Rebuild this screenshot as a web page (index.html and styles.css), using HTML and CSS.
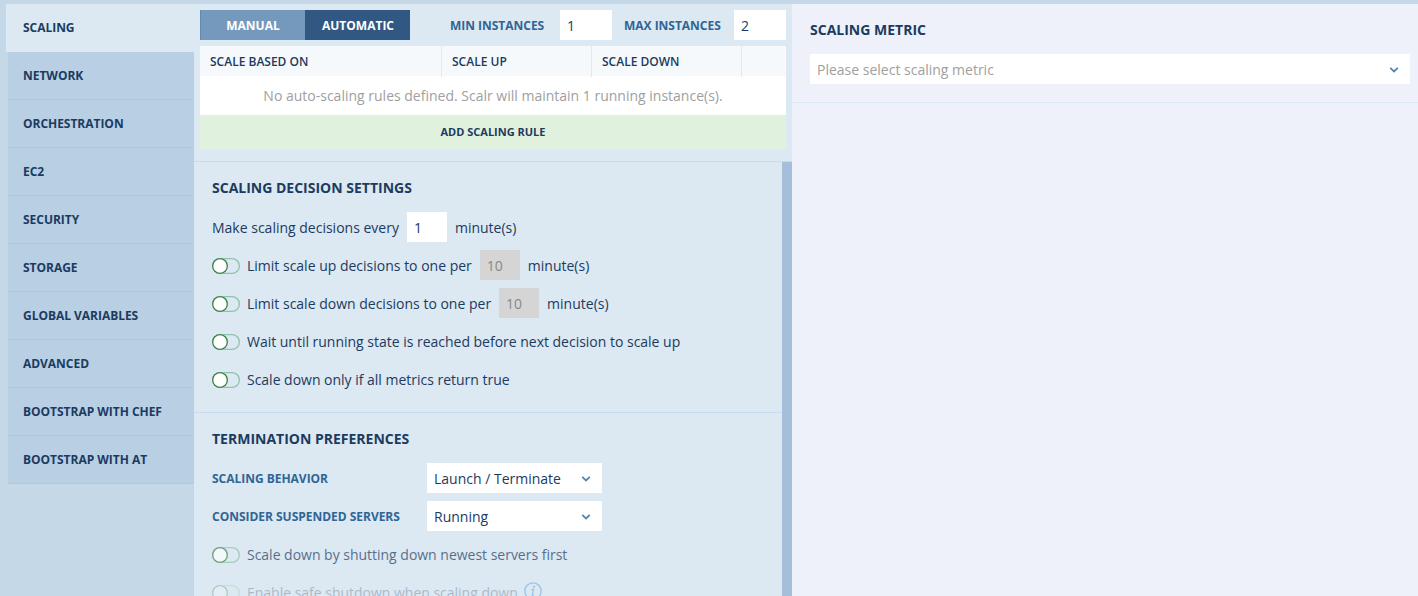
FILE: index.html
```html
<!DOCTYPE html>
<html lang="en">
<head>
<meta charset="utf-8">
<title>Scaling</title>
<link rel="stylesheet" href="styles.css">
</head>
<body>
<div class="app">
  <nav class="tabs">
    <a class="tab tab-active">SCALING</a>
    <a class="tab">NETWORK</a>
    <a class="tab">ORCHESTRATION</a>
    <a class="tab">EC2</a>
    <a class="tab">SECURITY</a>
    <a class="tab">STORAGE</a>
    <a class="tab">GLOBAL VARIABLES</a>
    <a class="tab">ADVANCED</a>
    <a class="tab">BOOTSTRAP WITH CHEF</a>
    <a class="tab">BOOTSTRAP WITH AT</a>
  </nav>

  <main class="main">
    <section class="rules">
      <div class="toolbar">
        <div class="segmented">
          <span class="segment">MANUAL</span>
          <span class="segment segment-on">AUTOMATIC</span>
        </div>
        <label class="label label-min">MIN INSTANCES</label>
        <div class="field field-count">1</div>
        <label class="label label-max">MAX INSTANCES</label>
        <div class="field field-count">2</div>
      </div>
      <div class="grid">
        <div class="grid-head">
          <span class="col">SCALE BASED ON</span>
          <span class="col">SCALE UP</span>
          <span class="col">SCALE DOWN</span>
          <span class="col"></span>
        </div>
        <div class="grid-empty">No auto-scaling rules defined. Scalr will maintain 1 running instance(s).</div>
        <div class="grid-add">ADD SCALING RULE</div>
      </div>
    </section>

    <div class="scroller">
      <div class="settings">
        <section class="group">
          <h2 class="title">SCALING DECISION SETTINGS</h2>
          <div class="row"><span class="text">Make scaling decisions every</span><div class="field field-small">1</div><span class="text">minute(s)</span></div>
          <div class="row"><i class="toggle"></i><span class="text">Limit scale up decisions to one per</span><div class="field field-small field-off">10</div><span class="text">minute(s)</span></div>
          <div class="row"><i class="toggle"></i><span class="text">Limit scale down decisions to one per</span><div class="field field-small field-off">10</div><span class="text">minute(s)</span></div>
          <div class="row"><i class="toggle"></i><span class="text text-long">Wait until running state is reached before next decision to scale up</span></div>
          <div class="row"><i class="toggle"></i><span class="text text-long">Scale down only if all metrics return true</span></div>
        </section>
        <section class="group">
          <h2 class="title">TERMINATION PREFERENCES</h2>
          <div class="row">
            <span class="label label-pref">SCALING BEHAVIOR</span>
            <div class="field select">Launch / Terminate<svg class="chevron" viewBox="0 0 10 6"><path d="M1.2 .8 5 4.4 8.8 .8"/></svg></div>
          </div>
          <div class="row">
            <span class="label label-pref">CONSIDER SUSPENDED SERVERS</span>
            <div class="field select">Running<svg class="chevron" viewBox="0 0 10 6"><path d="M1.2 .8 5 4.4 8.8 .8"/></svg></div>
          </div>
          <div class="row row-dim"><i class="toggle"></i><span class="text text-long">Scale down by shutting down newest servers first</span></div>
          <div class="row row-faint"><i class="toggle"></i><span class="text text-long">Enable safe shutdown when scaling down</span>
            <svg class="info" viewBox="0 0 18 18"><circle cx="9" cy="9" r="8.2"/><path d="M7.3 7.6H9.5L8.3 13.2H9.8"/><circle class="info-dot" cx="10" cy="4.8" r="1.1"/></svg>
          </div>
        </section>
      </div>
      <div class="scrollbar"></div>
    </div>
  </main>

  <aside class="side">
    <section class="metric">
      <h2 class="title">SCALING METRIC</h2>
      <div class="field select select-metric">Please select scaling metric<svg class="chevron" viewBox="0 0 10 6"><path d="M1.2 .8 5 4.4 8.8 .8"/></svg></div>
    </section>
  </aside>
</div>
</body>
</html>
```
FILE: styles.css
```css
* { box-sizing: border-box; }

body {
  margin: 0;
  background: #c5d8e7;
  color: #1b3b5f;
  font: 14px/20px "Open Sans", sans-serif;
  white-space: nowrap;
}

.app {
  display: flex;
  height: 596px;
  padding-top: 4px;
  overflow: hidden;
}

.tabs {
  width: 194px;
  flex: none;
  padding-left: 6px;
}

.tab {
  display: flex;
  align-items: center;
  height: 48px;
  margin-left: 2px;
  padding-left: 15px;
  background: #b8cfe4;
  border-bottom: 1px solid #abcae1;
  font-size: 12px;
  font-weight: 700;
  letter-spacing: -.03px;
}

.tab-active {
  margin-left: 0;
  padding-left: 17px;
  background: #dce8f2;
  border-bottom-color: #dce8f2;
}

.main {
  width: 598px;
  flex: none;
  display: flex;
  flex-direction: column;
  background: #dce8f2;
}

.rules {
  height: 158px;
  flex: none;
  padding: 6px 6px 0;
  border-bottom: 1px solid #c9dbeb;
}

.toolbar {
  display: flex;
  align-items: center;
  height: 30px;
  margin-bottom: 6px;
}

.segmented {
  display: flex;
  width: 210px;
  height: 30px;
  margin-right: 40px;
}

.segment {
  flex: 1;
  background: #7599bc;
  border-left: 1px solid #5f8ab3;
  color: #fff;
  font-size: 12px;
  font-weight: 700;
  line-height: 31px;
  text-align: center;
}

.segment-on {
  background: #315882;
  border-left-color: #315882;
}

.label {
  padding-top: 2px;
  color: #2f6595;
  font-size: 12px;
  font-weight: 700;
  letter-spacing: -.02px;
}

.label-min { width: 110px; }

.label-max {
  width: 110px;
  margin-left: 12px;
}

.label-pref { width: 215px; }

.field {
  height: 30px;
  padding-left: 7px;
  background: #fff;
  line-height: 32px;
}

.field-count { width: 52px; }

.field-small {
  width: 40px;
  margin: 0 8px;
}

.field-off {
  background: #d5d5d5;
  color: #888;
}

.grid { background: #fff; }

.grid-head {
  display: grid;
  grid-template-columns: 242px 150px 150px 1fr;
  height: 30px;
  background: #f5f9fc;
  font-size: 12px;
  font-weight: 600;
  line-height: 31px;
}

.col {
  padding-left: 10px;
  border-right: 1px solid #dfe9f3;
}

.col:last-child { border-right: 0; }

.grid-empty {
  height: 39px;
  color: #a0a0a0;
  line-height: 39px;
  text-align: center;
}

.grid-add {
  height: 34px;
  background: #e0f1de;
  font-size: 11px;
  font-weight: 700;
  line-height: 34px;
  text-align: center;
}

.scroller {
  flex: 1;
  min-height: 0;
  display: flex;
}

.settings {
  flex: 1;
  overflow: hidden;
}

.scrollbar {
  width: 10px;
  background: #a5bfdb;
}

.group {
  height: 251px;
  padding: 16px 18px 0;
  border-bottom: 1px solid #c8dced;
}

.title {
  margin: 0 0 14px;
  font-size: 14px;
  font-weight: 700;
  line-height: 20px;
}

.row {
  display: flex;
  align-items: center;
  height: 30px;
  margin-bottom: 8px;
}

.text { padding-top: 2px; }

.text-long { letter-spacing: -.014px; }

.toggle {
  position: relative;
  width: 28px;
  height: 16px;
  margin: 2px 7px 0 0;
  border-radius: 8px;
  box-shadow: inset 0 0 0 1.3px #92c2ad;
}

.toggle::before {
  content: "";
  position: absolute;
  left: 0;
  top: 0;
  width: 16px;
  height: 16px;
  border-radius: 50%;
  background: #fff;
  box-shadow: inset 0 0 0 1.3px #378041;
}

.row-dim > * { opacity: .7; }

.row-faint > * { opacity: .27; }

.select {
  display: flex;
  align-items: center;
  justify-content: space-between;
  width: 175px;
  padding-top: 2px;
  padding-right: 11px;
}

.chevron {
  width: 10px;
  height: 6px;
  fill: none;
  stroke: #5585b5;
  stroke-width: 1.8;
}

.row-faint .info {
  width: 18px;
  height: 18px;
  margin: -3px 0 0 6px;
  fill: none;
  stroke: #85b9e6;
  stroke-width: 1.2;
  opacity: .8;
}

.info .info-dot {
  fill: #85b9e6;
  stroke: none;
}

.side {
  flex: 1;
  background: #eef1fa;
}

.metric {
  height: 99px;
  padding: 16px 8px 0 18px;
  border-bottom: 1px solid #dbe7f5;
}

.select-metric {
  width: auto;
  color: #a0a0a0;
}
```
